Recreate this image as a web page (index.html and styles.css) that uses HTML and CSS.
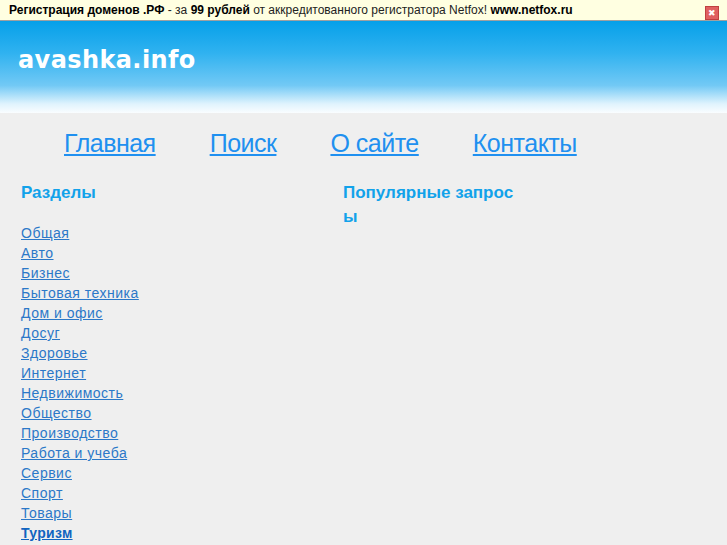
FILE: index.html
```html
<!DOCTYPE html>
<html lang="ru">
<head>
  <meta charset="UTF-8">
  <title>avashka.info</title>
  <link rel="stylesheet" href="styles.css">
</head>
<body>
  <div class="promo">
    <span><b>Регистрация доменов .РФ</b> - за <b>99 рублей</b> от аккредитованного регистратора Netfox! <b>www.netfox.ru</b></span>
    <span class="promo-close">&#10006;</span>
  </div>
  <div class="header">
    <div class="logo">avashka.info</div>
  </div>
  <div class="nav">
    <a href="#">Главная</a>
    <a href="#">Поиск</a>
    <a href="#">О сайте</a>
    <a href="#">Контакты</a>
  </div>
  <div class="content">
    <div class="sections">
      <h2>Разделы</h2>
      <ul class="cat-list">
        <li><a href="#">Общая</a></li>
        <li><a href="#">Авто</a></li>
        <li><a href="#">Бизнес</a></li>
        <li><a href="#">Бытовая техника</a></li>
        <li><a href="#">Дом и офис</a></li>
        <li><a href="#">Досуг</a></li>
        <li><a href="#">Здоровье</a></li>
        <li><a href="#">Интернет</a></li>
        <li><a href="#">Недвижимость</a></li>
        <li><a href="#">Общество</a></li>
        <li><a href="#">Производство</a></li>
        <li><a href="#">Работа и учеба</a></li>
        <li><a href="#">Сервис</a></li>
        <li><a href="#">Спорт</a></li>
        <li><a href="#">Товары</a></li>
        <li><a href="#" class="current">Туризм</a></li>
      </ul>
    </div>
    <div class="popular">
      <h2>Популярные запрос ы</h2>
    </div>
  </div>
</body>
</html>
```

FILE: styles.css
```css
body {
  margin: 0;
  padding: 0;
  background: #efefef;
  font-family: "Liberation Sans", Arial, sans-serif;
}
.promo {
  display: flex;
  justify-content: space-between;
  align-items: center;
  height: 20px;
  padding: 0 8px 0 9px;
  background: #ffffe1;
  border-bottom: 1px solid #a0a0a0;
  font-size: 12px;
  color: #222;
}
.promo b {
  color: #000;
}
.promo-close {
  width: 12px;
  height: 12px;
  margin-top: 6px;
  background: #e06060;
  border: 1px solid #c04040;
  color: #fff;
  font-size: 9px;
  line-height: 12px;
  text-align: center;
}
.header {
  height: 92px;
  background: linear-gradient(#06a0e9 0%, #30b2f0 35%, #72c9f5 70%, #dff3fd 90%, #fafdff 100%);
}
.logo {
  padding: 25px 0 0 18px;
  color: #fff;
  font-family: "DejaVu Sans", Verdana, sans-serif;
  font-weight: bold;
  font-size: 24px;
  letter-spacing: 0.4px;
}
.nav {
  display: flex;
  gap: 54px;
  padding: 16px 0 0 64px;
  height: 40px;
}
.nav a {
  color: #2090f0;
  font-size: 25px;
  letter-spacing: -0.5px;
}
.content {
  display: flex;
  padding: 12px 0 0 21px;
}
.sections {
  width: 322px;
}
.popular {
  width: 178px;
}
h2 {
  margin: 0 0 18px 0;
  color: #12a2ea;
  font-size: 17px;
  line-height: 24px;
}
.cat-list {
  margin: 0;
  padding: 0;
  list-style: none;
}
.cat-list li {
  line-height: 20px;
}
.cat-list a {
  color: #2b78c8;
  font-size: 14px;
  letter-spacing: 0.5px;
}
.cat-list a.current {
  color: #1064c0;
  font-weight: bold;
  letter-spacing: 0.3px;
}
```
